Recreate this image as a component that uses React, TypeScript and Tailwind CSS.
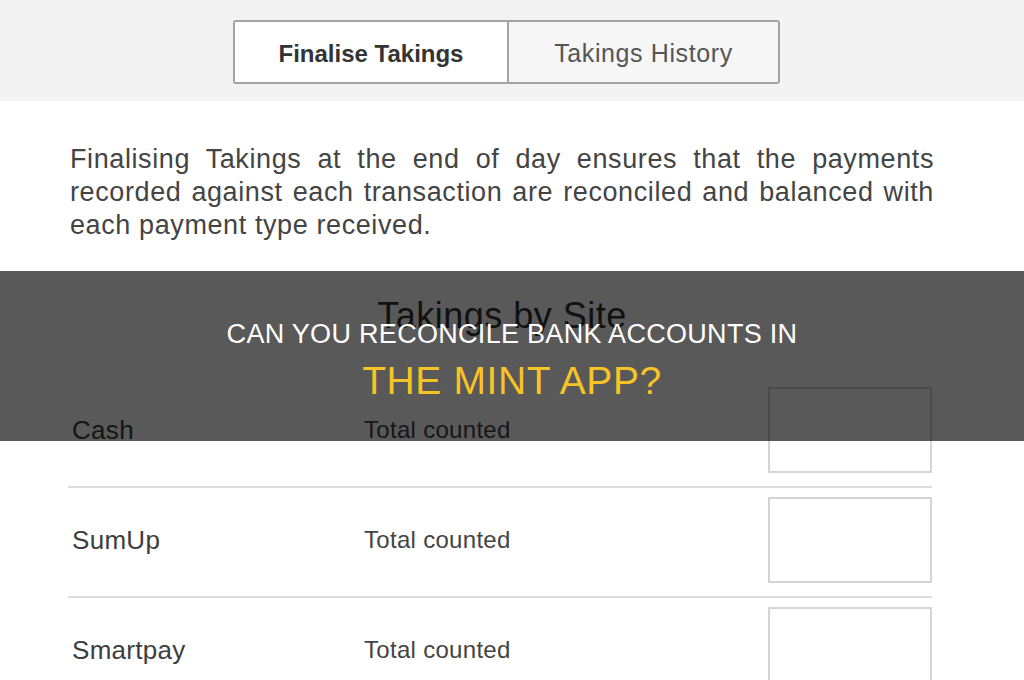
import React from "react"

const rows = ["Cash", "SumUp", "Smartpay"]

export default function App() {
  return (
    <div className="relative w-[1024px] h-[680px] overflow-hidden bg-white font-['Liberation_Sans',Arial,sans-serif] text-[#3d3d3d]">
      <div className="h-[101px] bg-[#f3f3f3] pt-[20px] pl-[233px]">
        <div className="flex h-[64px] w-[547px] rounded-[3px] border-2 border-[#a3a3a3] overflow-hidden">
          <div className="w-[272px] bg-white flex items-center justify-center pt-[4px] text-[24px] font-bold text-[#333]">
            Finalise Takings
          </div>
          <div className="flex-1 border-l-2 border-[#a3a3a3] bg-[#f6f6f6] flex items-center justify-center pt-[4px] text-[25px] tracking-[0.6px] text-[#555]">
            Takings History
          </div>
        </div>
      </div>

      <p className="ml-[70px] mr-[90px] mt-[42px] text-[27px] leading-[33px] tracking-[0.6px] text-justify text-[#444]">
        Finalising Takings at the end of day ensures that the payments recorded against each transaction are reconciled and balanced with each payment type received.
      </p>

      <h2 className="ml-[70px] mr-[90px] mt-[54px] text-center text-[36px] leading-[40px] tracking-[0.5px] text-[#333]">
        Takings by Site
      </h2>

      <div className="ml-[68px] mr-[92px] mt-[42px]">
        {rows.map((r) => (
          <div key={r} className="flex items-center pt-[9px] pb-[13px] border-b-2 border-[#dcdcdc]">
            <div className="w-[296px] pl-[4px] text-[26px] tracking-[0.3px]">{r}</div>
            <div className="flex-1 text-[24px] tracking-[0.3px] text-[#444]">Total counted</div>
            <div className="w-[164px] h-[86px] border-2 border-[#d4d4d4]" />
          </div>
        ))}
      </div>

      <div className="absolute left-0 right-0 top-[271px] h-[170px] bg-black/65 pt-[47px] text-center">
        <div className="text-white text-[27px] leading-[32px] tracking-[0.3px]">CAN YOU RECONCILE BANK ACCOUNTS IN</div>
        <div className="mt-[9px] text-[#f7c325] text-[39px] leading-[44px] tracking-[0.6px]">THE MINT APP?</div>
      </div>
    </div>
  )
}
